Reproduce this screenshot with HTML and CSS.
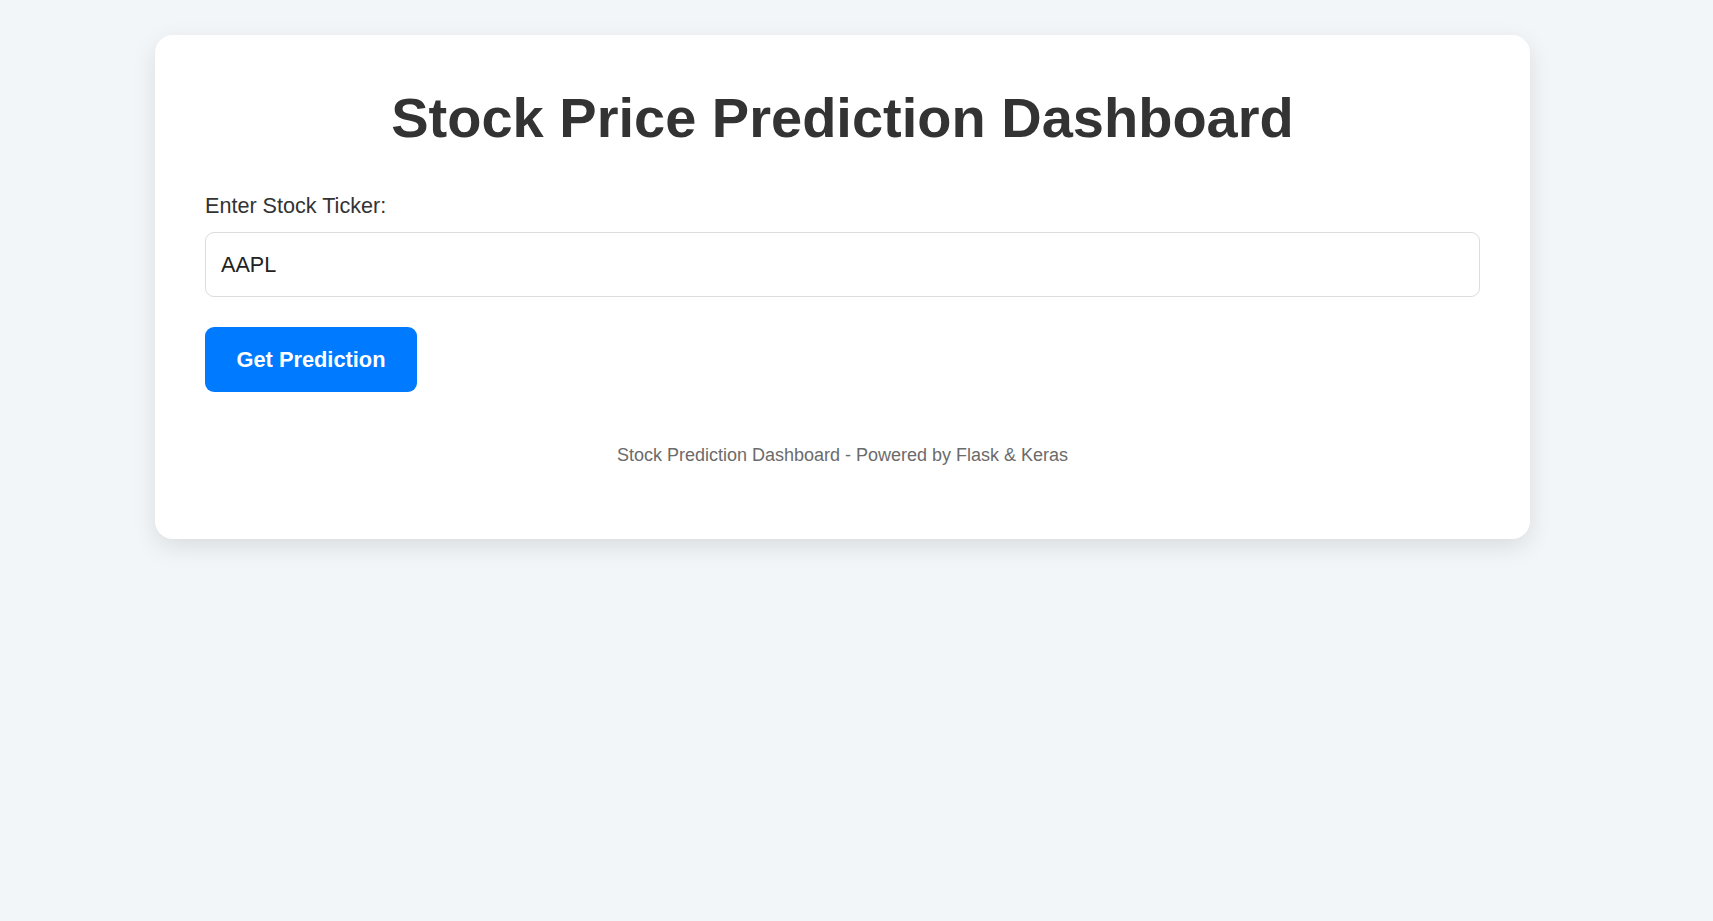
FILE: index.html
```html
<!DOCTYPE html>
<html lang="en">
<head>
<meta charset="utf-8">
<title>Stock Price Prediction Dashboard</title>
<link rel="stylesheet" href="styles.css">
</head>
<body>
<div class="card">
  <h1 class="title">Stock Price Prediction Dashboard</h1>
  <form class="form">
    <label class="label" for="ticker">Enter Stock Ticker:</label>
    <input class="input" id="ticker" type="text" value="AAPL">
    <button class="btn" type="button">Get Prediction</button>
  </form>
  <p class="footer">Stock Prediction Dashboard - Powered by Flask &amp; Keras</p>
</div>
</body>
</html>
```
FILE: styles.css
```css
html, body {
  margin: 0;
  padding: 0;
}
body {
  background: #f3f6f9;
  font-family: "Liberation Sans", Arial, sans-serif;
  color: #333;
  padding: 35px 0 40px 155px;
}
.card {
  box-sizing: border-box;
  width: 1375px;
  background: #fff;
  border-radius: 18px;
  box-shadow: 0 8px 24px rgba(0, 0, 0, 0.1);
  padding: 51px 50px 73px;
}
.title {
  margin: 0 0 43px;
  font-size: 56px;
  line-height: 64px;
  font-weight: bold;
  text-align: center;
  color: #333;
}
.form {
  margin: 0;
  display: flex;
  flex-direction: column;
  align-items: flex-start;
}
.label {
  display: block;
  font-size: 21.6px;
  line-height: 25px;
  color: #333;
  margin-bottom: 14px;
}
.input {
  box-sizing: border-box;
  width: 100%;
  height: 65px;
  padding: 0 15px;
  border: 1px solid #dcdcdc;
  border-radius: 9px;
  font-family: "Liberation Sans", Arial, sans-serif;
  font-size: 21.6px;
  color: #222;
  background: #fff;
  outline: none;
}
.btn {
  margin-top: 30px;
  box-sizing: border-box;
  width: 212px;
  height: 65px;
  border: none;
  border-radius: 9px;
  background: #007bff;
  color: #fff;
  font-family: "Liberation Sans", Arial, sans-serif;
  font-size: 21.8px;
  font-weight: bold;
  cursor: pointer;
}
.footer {
  margin: 53px 0 0;
  font-size: 18px;
  line-height: 21px;
  text-align: center;
  color: #6b6b6b;
}
```
